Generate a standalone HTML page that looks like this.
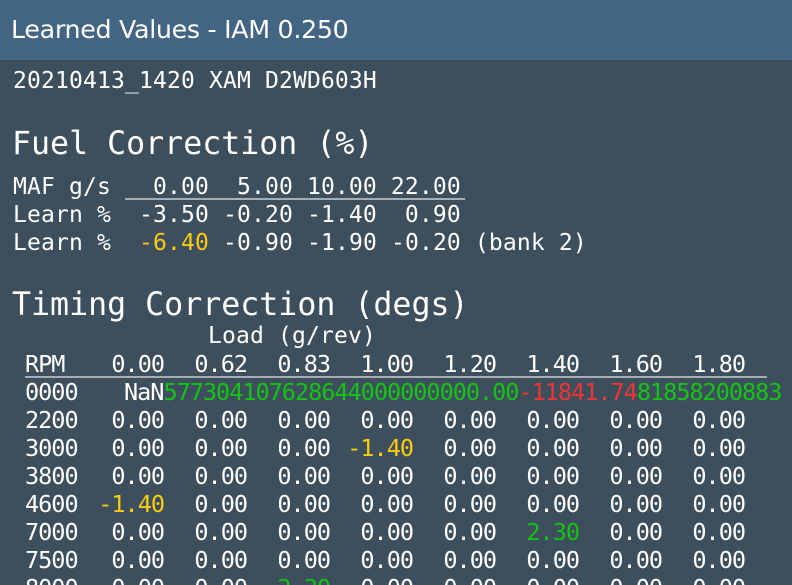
<!DOCTYPE html>
<html><head><meta charset="utf-8"><style>
html,body{margin:0;padding:0;overflow:hidden;width:792px;height:585px;}
body{background:#3d4e5c;color:#fff;position:relative;font-family:"DejaVu Sans Mono","Liberation Mono",monospace;}
.bar{position:absolute;left:0;top:0;width:792px;height:60px;background:#436584;}
.bar span{position:absolute;left:11px;top:15px;font-family:"DejaVu Sans","Liberation Sans",sans-serif;font-size:25.3px;letter-spacing:-0.3px;}
.m{position:absolute;white-space:pre;font-size:23px;letter-spacing:0.15px;line-height:28px;}
.t{position:absolute;white-space:pre;font-size:31.6px;line-height:36px;}
.c{position:absolute;white-space:pre;font-size:23.5px;letter-spacing:-1px;line-height:28px;}
.r{position:absolute;width:83px;text-align:right;}
.y{color:#f9cc0e}.g{color:#14c314}.rd{color:#f13434}
.hl{position:absolute;height:2px;background:#a6adb3;}
</style></head><body>
<div class="bar"><span>Learned Values - IAM 0.250</span></div>
<div class="m" style="left:13px;top:67px">20210413_1420 XAM D2WD603H</div>
<div class="t" style="left:12px;top:126px">Fuel Correction (%)</div>
<div class="m" style="left:13px;top:173px">MAF g/s   0.00  5.00 10.00 22.00
Learn %  -3.50 -0.20 -1.40  0.90
Learn %  <span class="y">-6.40</span> -0.90 -1.90 -0.20 (bank 2)</div>
<div class="hl" style="left:125px;top:198px;width:340px"></div>
<div class="t" style="left:12px;top:287px">Timing Correction (degs)</div>
<div class="m" style="left:208px;top:322px">Load (g/rev)</div>
<div class="hl" style="left:25px;top:376px;width:742px"></div>
<div id="tbl"></div>
<script>
var rows=[["RPM",["0.00","0.62","0.83","1.00","1.20","1.40","1.60","1.80"]],
["2200",[]],["3000",[0,0,0,"y-1.40"]],["3800",[]],["4600",["y-1.40"]],["7000",[0,0,0,0,0,"g2.30"]],["7500",[]],["8000",[0,0,"g2.30"]]];
var h="";
rows.forEach(function(r,i){
 var top=i==0?350:(i+1)*28+350;
 h+='<div class="c" style="left:25px;top:'+top+'px">'+r[0]+'</div>';
 for(var k=0;k<8;k++){
  var v=r[1][k]; var cls="";
  if(!v){v="0.00";} else if(v[0]=="y"||v[0]=="g"){cls=v[0];v=v.slice(1);}
  h+='<div class="c r '+cls+'" style="left:'+(81+83*k)+'px;top:'+top+'px">'+v+'</div>';
 }
});
h+='<div class="c" style="left:25px;top:378px">0000</div>';
h+='<div class="c" style="left:124px;top:378px">NaN<span class="g">577304107628644000000000.00</span><span class="rd">-11841.74</span><span class="g">81858200883</span></div>';
document.getElementById("tbl").innerHTML=h;
</script>
</body></html>
